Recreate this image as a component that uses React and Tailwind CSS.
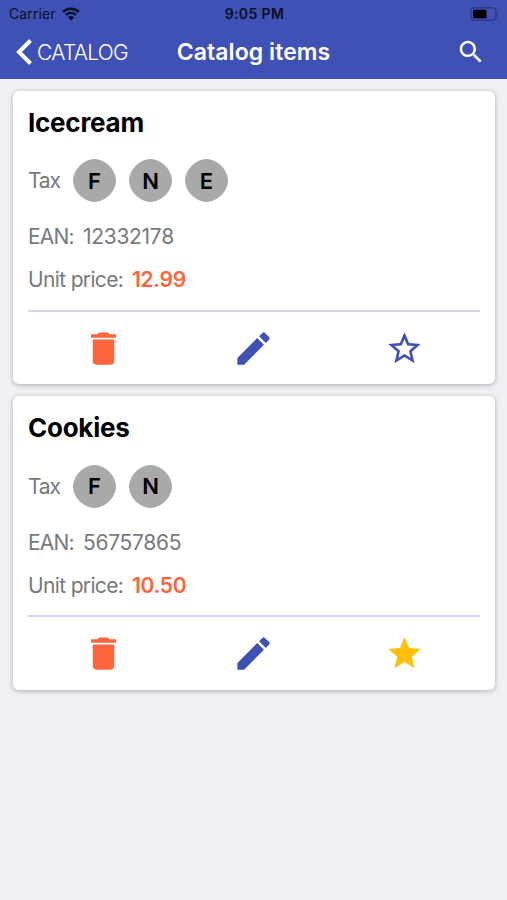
const Badge = ({ children }) => (
  <div className="relative flex h-[43px] w-[43px] items-center justify-center">
    <svg viewBox="0 0 43 43" className="absolute inset-0 h-full w-full" fill="#a9a9a9">
      <path d="M21.5 0C26.8 0 32.7 3.1 36.3 6.7C39.9 10.3 43 16.2 43 21.5C43 26.8 39.9 32.7 36.3 36.3C32.7 39.9 26.8 43 21.5 43C16.2 43 10.3 39.9 6.7 36.3C3.1 32.7 0 26.8 0 21.5C0 16.2 3.1 10.3 6.7 6.7C10.3 3.1 16.2 0 21.5 0Z" />
    </svg>
    <span className="relative text-[22px] leading-none font-semibold text-black">{children}</span>
  </div>
);

const Icon = ({ d, className }) => (
  <svg viewBox="0 0 24 24" className={className} fill="currentColor">
    <path d={d} />
  </svg>
);

const TRASH = "M19 4H15.5L14.5 3H9.5L8.5 4H5V6H19M6 19A2 2 0 0 0 8 21H16A2 2 0 0 0 18 19V7H6V19Z";
const PENCIL = "M20.71 7.04C21.1 6.65 21.1 6 20.71 5.63L18.37 3.29C18 2.9 17.35 2.9 16.96 3.29L15.12 5.12L18.87 8.87M3 17.25V21H6.75L17.81 9.93L14.06 6.18L3 17.25Z";
const STAR = "M12 17.27L18.18 21L16.54 13.97L22 9.24L14.81 8.62L12 2L9.19 8.62L2 9.24L7.45 13.97L5.82 21L12 17.27Z";
const STAR_OUTLINE = "M12 15.39L8.24 17.66L9.23 13.38L5.91 10.5L10.29 10.13L12 6.09L13.71 10.13L18.09 10.5L14.77 13.38L15.76 17.66M22 9.24L14.81 8.63L12 2L9.19 8.63L2 9.24L7.45 13.97L5.82 21L12 17.27L18.18 21L16.54 13.97L22 9.24Z";
const SEARCH = "M15.5 14h-.79l-.28-.27C15.41 12.59 16 11.11 16 9.5 16 5.91 13.09 3 9.5 3S3 5.91 3 9.5 5.91 16 9.5 16c1.61 0 3.09-.59 4.23-1.57l.27.28v.79l5 4.99L20.49 19l-4.99-5zm-6 0C7.01 14 5 11.99 5 9.5S7.01 5 9.5 5 14 7.01 14 9.5 11.99 14 9.5 14z";

const items = [
  { name: "Icecream", taxes: ["F", "N", "E"], ean: "12332178", price: "12.99", starred: false },
  { name: "Cookies", taxes: ["F", "N"], ean: "56757865", price: "10.50", starred: true },
];

const Card = ({ item }) => (
  <article className="h-[293.5px] rounded-[6px] bg-white px-[15px] pt-[15px] shadow-[0_1px_5px_rgba(0,0,0,0.28)]">
    <h2 className="h-[34px] text-[26px] leading-[34px] font-bold tracking-[-0.25px] text-black">{item.name}</h2>
    <div className="mt-[19.5px] flex h-[43px] items-center">
      <span className="w-[45px] pt-[1px] text-[21px] tracking-[-1.2px]">Tax</span>
      <div className="flex gap-[13px]">
        {item.taxes.map((tax) => <Badge key={tax}>{tax}</Badge>)}
      </div>
    </div>
    <div className="mt-[20px] flex h-[30px] items-center text-[21px]">
      <span className="w-[55px] tracking-[-0.8px]">EAN:</span>
      <span className="tracking-[-0.3px]">{item.ean}</span>
    </div>
    <div className="mt-[13px] flex h-[30px] items-center text-[21px]">
      <span className="w-[104px] tracking-[-0.65px]">Unit price:</span>
      <span className="font-semibold tracking-[-0.3px] text-[#ff643b]">{item.price}</span>
    </div>
    <div className="mt-[14.5px] h-[2px] bg-[#d4d5ec]" />
    <div className="grid h-[73px] grid-cols-3 place-items-center text-[#3f51b5]">
      <Icon d={TRASH} className="h-[43px] w-[43px] text-[#ff643b]" />
      <Icon d={PENCIL} className="h-[43px] w-[43px]" />
      <Icon
        d={item.starred ? STAR : STAR_OUTLINE}
        className={item.starred ? "h-[39px] w-[39px] text-[#ffc107]" : "h-[39px] w-[39px]"}
      />
    </div>
  </article>
);

export default function App() {
  return (
    <div className="h-[900px] w-full overflow-hidden whitespace-nowrap bg-[#efeff4] font-['Inter',sans-serif] text-[#77797c]">
      <header className="h-[79px] bg-[#3f51b5]">
        <div className="grid h-[27px] grid-cols-3 items-center pr-[7px] pl-[9px] text-[14px] text-[#0b0f22]">
          <div className="flex items-center gap-[6px]">
            <span className="tracking-[0.1px]">Carrier</span>
            <svg viewBox="0 0 18 14" className="h-[14px] w-[18px]" fill="none" stroke="currentColor" strokeWidth="2.4">
              <path d="M1 5A11.3 11.3 0 0 1 17 5M3.9 8A7.2 7.2 0 0 1 14.1 8" />
              <path d="M9 13.5L6 10.5A4.3 4.3 0 0 1 12 10.5Z" fill="currentColor" stroke="none" />
            </svg>
          </div>
          <span className="justify-self-center font-semibold tracking-[0.4px]">9:05 PM</span>
          <svg viewBox="0 0 30 14" className="h-[14px] w-[30px] justify-self-end" fill="none">
            <rect x="1" y="0.8" width="25" height="12.4" rx="3.5" stroke="#27367f" strokeWidth="1.2" />
            <rect x="3" y="2.8" width="13.5" height="8.4" rx="1.5" fill="#000" />
            <path d="M27.5 4.8Q29.5 7 27.5 9.2Z" fill="#27367f" />
          </svg>
        </div>
        <div className="grid h-[50px] grid-cols-[160px_1fr_160px] items-center text-white">
          <div className="flex items-center pl-[16px]">
            <svg viewBox="0 0 16 26" className="h-[26px] w-[16px]" fill="none" stroke="currentColor" strokeWidth="4">
              <path d="M14.5 1.5L3 13L14.5 24.5" />
            </svg>
            <span className="ml-[5px] pt-[1px] text-[21px] font-light tracking-[-0.7px]">CATALOG</span>
          </div>
          <h1 className="justify-self-center text-[23px] font-semibold tracking-[0.08px]">Catalog items</h1>
          <Icon d={SEARCH} className="mr-[21px] h-[30px] w-[30px] justify-self-end" />
        </div>
      </header>
      <main className="flex flex-col gap-[12px] pt-[11.5px] pr-[12px] pl-[13px]">
        {items.map((item) => <Card key={item.name} item={item} />)}
      </main>
    </div>
  );
}
